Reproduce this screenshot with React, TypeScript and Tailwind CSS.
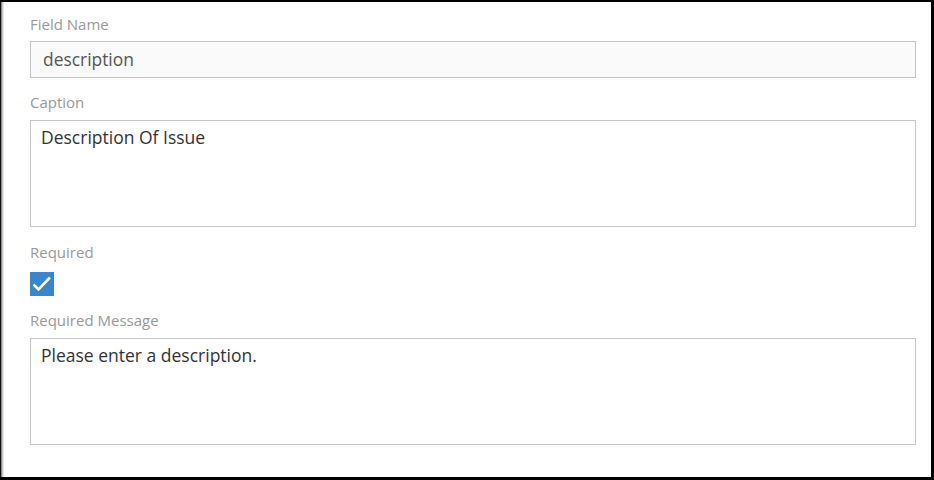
export default function App() {
  return (
    <div
      className="w-[934px] h-[480px] bg-black flex pt-[2px] pr-[3px] pb-[3px]"
      style={{ fontFamily: '"Open Sans", sans-serif' }}
    >
      <div className="flex h-full w-full">
        <div className="w-[1px] bg-[#111]" />
        <div className="w-[1px] bg-[#8a8a8a]" />
        <div className="w-[1px] bg-[#c8c8c8]" />
        <div className="w-[1px] bg-[#e6e6e6]" />
        <div className="flex-1 bg-white pl-[26px] pr-[15px] pt-[12px] flex flex-col">
          <label className="text-[15px] leading-[20px] text-[#999]">Field Name</label>
          <div className="mt-[7px] h-[37px] border border-[#c6c6c6] bg-[#fafafa] flex items-center pl-[12px] text-[17.4px] text-[#555]">
            description
          </div>
          <label className="mt-[14px] text-[15px] leading-[20px] text-[#999]">Caption</label>
          <div className="mt-[8px] h-[107px] border border-[#c6c6c6] bg-white pl-[10px] pt-[4px] text-[17.5px] leading-[24px] text-[#333]">
            Description Of Issue
          </div>
          <label className="mt-[15px] text-[15px] leading-[20px] text-[#999]">Required</label>
          <div className="mt-[10px] w-[24px] h-[24px] bg-[#3a85cf] flex items-center justify-center">
            <svg width="24" height="24" viewBox="0 0 24 24">
              <path d="M3.5 12.5 L8.5 17.5 L20 5.5" fill="none" stroke="white" strokeWidth="2.6" />
            </svg>
          </div>
          <label className="mt-[14px] text-[15px] leading-[20px] text-[#999]">Required Message</label>
          <div className="mt-[8px] h-[107px] border border-[#c6c6c6] bg-white pl-[10px] pt-[4px] text-[17.5px] leading-[24px] text-[#333]">
            Please enter a description.
          </div>
        </div>
      </div>
    </div>
  );
}
